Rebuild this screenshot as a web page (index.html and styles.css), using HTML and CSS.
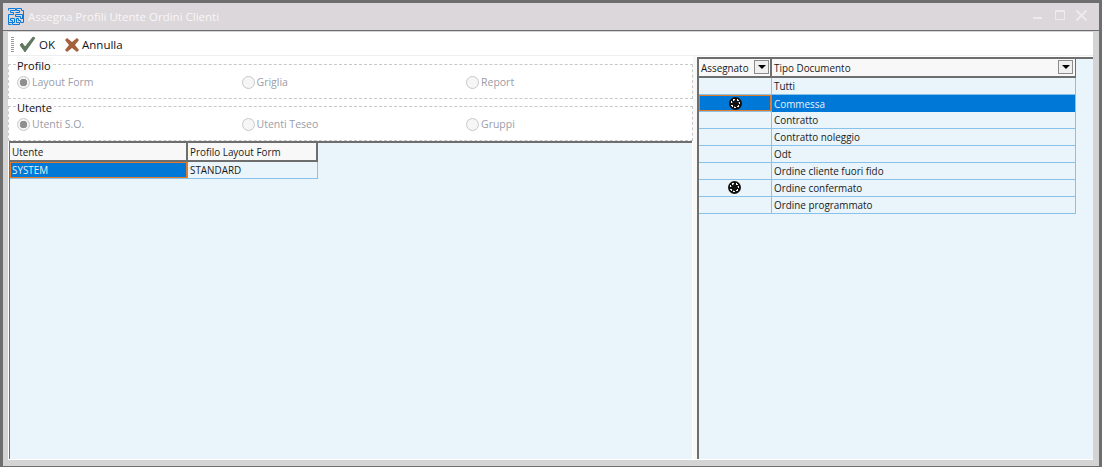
FILE: index.html
```html
<!DOCTYPE html>
<html lang="en">
<head>
    <meta charset="UTF-8">
    <title>Assegna Profili Utente Ordini Clienti</title>
    <link rel="stylesheet" href="styles.css">
</head>
<body>
    <div class="window">
        <div class="titlebar">
            <svg class="app-icon" width="17" height="17" viewBox="0 0 17 17" fill="none" stroke="#0a78d8" stroke-width="1">
                <path d="M.5 2.500V.5h7v2h-5v2h3v2h-5v8h4v-2h-2v-2h4v4h-2v2h7v-2h-3v-4h2v2h2v2h3v-4h-3V8.500h-5v-2h7v4h1V2.500h-2V.5h-5v2h3v2H7.500"/>
                <path d="M.5 14.500v2h3"/>
            </svg>
            <span class="title">Assegna Profili Utente Ordini Clienti</span>
            <div class="win-buttons">
                <span class="btn-min"></span>
                <span class="btn-max"></span>
                <svg width="11" height="11" viewBox="0 0 11 11" stroke="#eeeaec" stroke-width="2"><path d="M.5.5l10 10M10.500.5l-10 10"/></svg>
            </div>
        </div>
        <div class="content">
            <div class="toolbar">
                <span class="gripper"></span>
                <button class="tool">
                    <svg width="17" height="17" viewBox="0 0 17 17"><path d="M1 9l2-2 3 4 8-10 2 1-10 14z" fill="#5f7a5c" stroke="#3f5a4a" stroke-width=".6"/></svg>
                    OK
                </button>
                <button class="tool">
                    <svg width="14" height="14" viewBox="0 0 14 14"><path d="M0 2l2-2 5 4 5-4 2 2-4 5 4 5-2 2-5-4-5 4-2-2 4-5z" fill="#a5603c"/></svg>
                    Annulla
                </button>
            </div>
            <div class="panes">
                <div class="left-pane">
                    <fieldset class="group">
                        <legend>Profilo</legend>
                        <div class="radio-col"><span class="radio checked"></span>Layout Form</div>
                        <div class="radio-col"><span class="radio"></span>Griglia</div>
                        <div class="radio-col"><span class="radio"></span>Report</div>
                    </fieldset>
                    <fieldset class="group">
                        <legend>Utente</legend>
                        <div class="radio-col"><span class="radio checked"></span>Utenti S.O.</div>
                        <div class="radio-col"><span class="radio"></span>Utenti Teseo</div>
                        <div class="radio-col"><span class="radio"></span>Gruppi</div>
                    </fieldset>
                    <div class="grid-area users">
                        <div class="grid-head">
                            <div class="cell col-user">Utente</div>
                            <div class="cell col-profile">Profilo Layout Form</div>
                        </div>
                        <div class="grid-row">
                            <div class="cell col-user selected focused">SYSTEM</div>
                            <div class="cell col-profile">STANDARD</div>
                        </div>
                    </div>
                </div>
                <div class="splitter"></div>
                <div class="right-pane">
                    <div class="grid-area docs">
                        <div class="grid-head">
                            <div class="cell col-flag">Assegnato<span class="drop"></span></div>
                            <div class="cell col-type">Tipo Documento<span class="drop"></span></div>
                        </div>
                        <div class="grid-row">
                            <div class="cell col-flag"></div>
                            <div class="cell col-type">Tutti</div>
                        </div>
                        <div class="grid-row">
                            <div class="cell col-flag selected focused"><span class="mark"></span></div>
                            <div class="cell col-type selected">Commessa</div>
                        </div>
                        <div class="grid-row">
                            <div class="cell col-flag"></div>
                            <div class="cell col-type">Contratto</div>
                        </div>
                        <div class="grid-row">
                            <div class="cell col-flag"></div>
                            <div class="cell col-type">Contratto noleggio</div>
                        </div>
                        <div class="grid-row">
                            <div class="cell col-flag"></div>
                            <div class="cell col-type">Odt</div>
                        </div>
                        <div class="grid-row">
                            <div class="cell col-flag"></div>
                            <div class="cell col-type">Ordine cliente fuori fido</div>
                        </div>
                        <div class="grid-row">
                            <div class="cell col-flag"><span class="mark"></span></div>
                            <div class="cell col-type">Ordine confermato</div>
                        </div>
                        <div class="grid-row">
                            <div class="cell col-flag"></div>
                            <div class="cell col-type">Ordine programmato</div>
                        </div>
                    </div>
                </div>
            </div>
        </div>
    </div>
</body>
</html>
```

FILE: styles.css
```css
html, body {
    margin: 0;
    height: 100%;
    overflow: hidden;
}
body {
    background: #6e6e6e;
    font-family: "Open Sans", "Noto Sans", sans-serif;
    font-size: 10.5px;
    color: #1a1a1a;
}
.window {
    box-sizing: border-box;
    height: 467px;
    padding: 3px 3px 1px;
    display: flex;
    flex-direction: column;
}

/* title bar */
.titlebar {
    box-sizing: border-box;
    height: 28px;
    flex: none;
    background: #dcd7da;
    border-bottom: 1px solid #6e6e6e;
    display: flex;
    align-items: center;
    padding: 0 0 0 5px;
}
.app-icon {
    margin-right: 3px;
}
.title {
    color: #f8f6f7;
    font-size: 11.5px;
}
.win-buttons {
    margin-left: auto;
    margin-right: 12px;
    margin-bottom: 3px;
    display: flex;
    align-items: center;
    gap: 11px;
}
.btn-min {
    width: 9px;
    height: 2px;
    margin-top: 6px;
    margin-right: 2px;
    background: #eeeaec;
}
.btn-max {
    box-sizing: border-box;
    width: 10px;
    height: 10px;
    border: 1px solid #eeeaec;
    border-top-width: 2px;
}

/* body of the window */
.content {
    flex: 1;
    min-height: 0;
    background: #d4d4d4;
    padding: 0 6px 6px 5px;
    display: flex;
    flex-direction: column;
}
.toolbar {
    box-sizing: border-box;
    height: 24px;
    flex: none;
    margin-top: 1px;
    padding: 2px 0 0 3px;
    background: #fff;
    border-bottom: 1px solid #eee;
    display: flex;
    align-items: center;
}
.gripper {
    width: 3px;
    height: 15px;
    margin-right: 5px;
    background: repeating-linear-gradient(#9a9a9a 0 1px, transparent 1px 2px);
}
.tool {
    border: 0;
    background: none;
    padding: 0;
    margin-right: 10px;
    display: flex;
    align-items: center;
    gap: 3px;
    font: inherit;
    font-size: 11.5px;
    color: #10131f;
}
.panes {
    flex: 1;
    min-height: 0;
    display: flex;
    background: #fff;
    padding-bottom: 1px;
}
.left-pane {
    width: 685px;
    flex: none;
    display: flex;
    flex-direction: column;
    padding-top: 1px;
}
.splitter {
    width: 4px;
    flex: none;
    background: #f8f8f8;
}
.right-pane {
    flex: 1;
    display: flex;
    padding-top: 1px;
    background: #fff;
}

/* radio groups */
.group {
    box-sizing: border-box;
    height: 42px;
    margin: 0;
    padding: 0 0 0 8px;
    border: 1px dashed #c8c8c8;
    display: flex;
    align-items: center;
}
.group legend {
    padding: 2px 2px 0 0;
    font-size: 11px;
    line-height: 13px;
    color: #111;
    background: #fafafa;
}
.radio-col {
    width: 224.5px;
    display: flex;
    align-items: center;
    gap: 2px;
    color: #9a9ca8;
    margin-top: 3px;
}
.radio {
    box-sizing: border-box;
    width: 13px;
    height: 13px;
    border-radius: 50%;
    border: 1px solid #c8c8c8;
    background: #f6f6f6;
    flex: none;
}
.radio.checked {
    background: radial-gradient(circle, #8f8f8f 0 3.5px, #f4f4f4 4px);
}

/* grids */
.grid-area {
    flex: 1;
    box-sizing: border-box;
    background: #e9f4fb;
    border-left: 1px solid #6e6e6e;
}
.users {
    border-top: 2px solid #6e6e6e;
    margin: 0 1px 0 1px;
}
.docs {
    border-top: 2px solid #6e6e6e;
    border-left-width: 2px;
}
.grid-head {
    display: flex;
    height: 19px;
    box-sizing: border-box;
    border-bottom: 2px solid #6e6e6e;
    background: #f8f8f8;
}
.users .grid-head {
    width: 308px;
    border-right: 2px solid #6e6e6e;
}
.docs .grid-head {
    width: 377px;
    border-right: 1px solid #6e6e6e;
}
.grid-row {
    display: flex;
    height: 17px;
    box-sizing: border-box;
    border-bottom: 1px solid #88c2e8;
}
.users .grid-row {
    width: 308px;
    border-right: 1px solid #88c2e8;
}
.docs .grid-row {
    width: 377px;
    border-right: 1px solid #88c2e8;
}
.cell {
    box-sizing: border-box;
    display: flex;
    align-items: center;
    padding-left: 2px;
    white-space: nowrap;
    font-size: 9.9px;
    position: relative;
}
.col-user { width: 178px; }
.col-profile { flex: 1; }
.col-flag { width: 73px; }
.col-type { flex: 1; }
.grid-head .col-user,
.grid-head .col-flag {
    border-right: 2px solid #6e6e6e;
}
.grid-row .col-user,
.grid-row .col-flag {
    border-right: 1px solid #88c2e8;
}
.selected {
    background: #0078d7;
    color: #e8f2fb;
}
.grid-row .focused {
    padding-left: 1px;
    border: 1px solid #e07b2c;
    border-width: 1px 2px 1px 1px;
}
.col-type.selected {
    margin-bottom: -1px;
}

/* filter arrow in header */
.drop {
    position: absolute;
    right: 1px;
    top: 1px;
    box-sizing: border-box;
    width: 15px;
    height: 14px;
    border: 1px solid #8c8c8c;
    background: #f0f0f0;
}
.col-type .drop {
    right: 2px;
}
.drop::after {
    content: "";
    position: absolute;
    left: 3px;
    top: 4px;
    border: 4px solid transparent;
    border-top: 4px solid #000;
    border-bottom: 0;
}

/* checked mark in Assegnato */
.mark {
    position: absolute;
    left: 29px;
    top: 1px;
    width: 13px;
    height: 13px;
    border-radius: 50%;
    background:
        radial-gradient(circle, #111 0 3px, transparent 3.5px 4.5px, #111 5px),
        repeating-conic-gradient(#111 0 20deg, #f4f4f4 20deg 50deg);
}
```
